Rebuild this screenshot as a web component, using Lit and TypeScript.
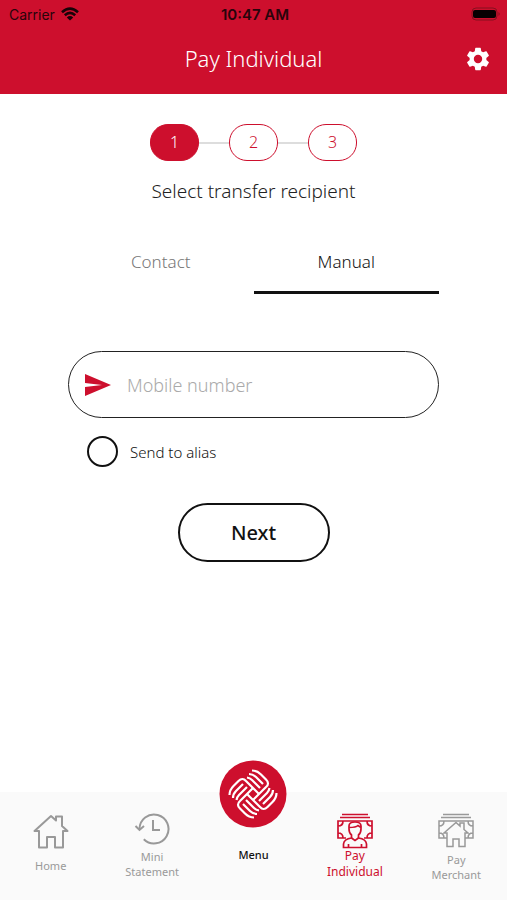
import { LitElement, html, css, svg } from "lit";
import { customElement, state } from "lit/decorators.js";

const wifiIcon = html`<svg width="18" height="14" viewBox="0 0 18 14" fill="none" stroke="#180308" stroke-width="2.6" aria-hidden="true">
  <path d="M1 5.2Q9-2 17 5.2M3.800 8.200Q9 3.600 14.200 8.200" />
  <path d="M9 13.500L5.800 10.400Q9 7.600 12.200 10.400Z" fill="#180308" stroke="none" />
</svg>`;

const batteryIcon = html`<svg width="30" height="14" viewBox="0 0 30 14" aria-hidden="true">
  <rect x="1" y="1" width="25" height="12" rx="4" fill="none" stroke="#85101f" />
  <rect x="2" y="3" width="23" height="8" rx="2" fill="#080002" />
  <path d="M27.500 5Q30 7 27.500 9Z" fill="#85101f" />
</svg>`;

const gearIcon = html`<svg width="28" height="28" viewBox="0 0 24 24" fill="#fff" aria-hidden="true">
  <path d="M19.140 12.940c.04-.3.06-.61.06-.94 0-.32-.02-.64-.07-.94l2.030-1.580c.18-.14.23-.41.12-.61l-1.920-3.320c-.12-.22-.37-.29-.59-.22l-2.390.96c-.5-.38-1.030-.7-1.620-.94l-.36-2.540c-.04-.24-.24-.41-.48-.41h-3.840c-.24 0-.43.17-.47.41l-.36 2.540c-.59.24-1.130.57-1.620.94l-2.390-.96c-.22-.08-.47 0-.59.22L2.740 8.870c-.12.21-.08.47.12.61l2.030 1.580c-.05.3-.09.63-.09.94s.02.64.07.94l-2.030 1.580c-.18.14-.23.41-.12.61l1.920 3.320c.12.22.37.29.59.22l2.390-.96c.5.38 1.030.7 1.620.94l.36 2.540c.05.24.24.41.48.41h3.840c.24 0 .44-.17.47-.41l.36-2.540c.59-.24 1.130-.56 1.620-.94l2.390.96c.22.08.47 0 .59-.22l1.920-3.320c.12-.22.07-.47-.12-.61zM12 15.600a3.600 3.600 0 1 1 0-7.200 3.600 3.600 0 0 1 0 7.200z" />
</svg>`;

const sendIcon = html`<svg width="26" height="24" viewBox="0 0 26 24" fill="#cd0f2d" aria-hidden="true">
  <path d="M0 1L26 12L0 23V14L17 12L0 10Z" />
</svg>`;

const homeIcon = html`<svg width="36" height="36" viewBox="0 0 36 36" fill="none" stroke="currentColor" stroke-width="2" stroke-linejoin="round" aria-hidden="true">
  <path d="M6 17H1.500L18 2L23 6.500V2.500H29V12L34.500 17H30V33.500H22V23H14V33.500H6Z" />
</svg>`;

const historyIcon = html`<svg width="36" height="34" viewBox="0 0 36 34" fill="none" stroke="currentColor" stroke-width="2" aria-hidden="true">
  <path d="M5.500 17A14.500 14.500 0 1 1 9.800 27.300" />
  <path d="M1.500 14L5.500 18L10 14M19 8V18H26" />
</svg>`;

const notes = svg`<path d="M5 1.500H31M3 4.500H33" />
  <path d="M9 25H1V8H35V25H27M1 13Q6 13 6 8M30 8Q30 13 35 13M1 20Q6 20 6 25M30 25Q30 20 35 20" />`;

const individualIcon = html`<svg width="36" height="36" viewBox="0 0 36 36" fill="none" stroke="currentColor" stroke-width="1.700" aria-hidden="true">
  ${notes}
  <path fill="#fafafa" d="M6.500 34.500V31Q7 26 14.500 25V22Q12 20 12 16V13Q12 9 18 9Q24 9 24 13V16Q24 20 21.500 22V25Q29 26 29.500 31V34.500Z" />
  <path d="M12 14.500Q19 14.500 21 12.500L24 14.500M14.500 25L18 27.500L21.500 25M11.500 31V34M24.500 31V34" />
</svg>`;

const merchantIcon = html`<svg width="36" height="36" viewBox="0 0 36 36" fill="none" stroke="currentColor" stroke-width="1.500" aria-hidden="true">
  ${notes}
  <path fill="#fafafa" d="M9 20H6L18 9.500L22 13V10H26V16.500L30 20H27V33.500H21V26H15V33.500H9Z" />
</svg>`;

const strands =
  "M-1 -23.500Q4 -23.500 8 -19.500L13 -14.500Q17 -10.500 13 -7L0 6" +
  "M-4 -20Q0 -20 3 -17L10 -10" +
  "M-6 -16.500Q-3 -16 -1 -14L7 -6";
const logo = html`<svg width="68" height="68" viewBox="-34 -34 68 68" aria-hidden="true">
  <circle r="33.500" fill="#cd0f2d" />
  <g fill="none" stroke="#fff" stroke-width="2.200">
    ${[0, 90, 180, 270].map((a) => svg`<path d=${strands} transform="rotate(${a})" />`)}
  </g>
</svg>`;

@customElement("app-root")
export class AppRoot extends LitElement {
  @state() private tab = "Manual";

  static styles = css`
    :host {
      display: flex;
      flex-direction: column;
      min-height: 100vh;
      background: #fff;
      color: #333;
      font-family: "Noto Sans", "Open Sans", sans-serif;
      font-weight: 300;
    }
    * { box-sizing: border-box; }
    svg { display: block; flex: none; }
    button { font: inherit; color: inherit; background: none; border: 0; padding: 0; }
    .header { background: #cd0f2d; padding-bottom: 10px; }
    .status {
      display: grid;
      grid-template-columns: 1fr auto 1fr;
      align-items: center;
      height: 28px;
      padding: 0 6px 0 9px;
      font: 400 14px "Inter", sans-serif;
      color: #28040b;
    }
    .carrier { display: flex; align-items: center; gap: 6px; }
    .time { font-size: 15px; font-weight: 600; }
    .battery { justify-self: end; }
    .bar {
      display: grid;
      grid-template-columns: 1fr auto 1fr;
      align-items: center;
      height: 56px;
      padding: 6px 15px 0;
      color: #fff;
    }
    .title { grid-column: 2; margin: 0; font-size: 22px; line-height: 30px; padding-bottom: 2px; font-weight: 300; }
    .settings { justify-self: end; }
    .main {
      flex: 1;
      display: flex;
      flex-direction: column;
      align-items: center;
      padding: 30px 68px 40px;
    }
    .steps { display: flex; align-items: center; list-style: none; margin: 0; padding: 0; }
    .step {
      width: 49px;
      height: 37px;
      border: 1px solid #cd0f2d;
      border-radius: 18px;
      color: #cd0f2d;
      font-size: 16px;
      line-height: 34px;
      text-align: center;
    }
    .step.current { background: #cd0f2d; color: #fff; }
    .link { width: 30px; height: 2px; background: #ddd; }
    .prompt { margin: 16px 0 0; font-size: 19px; line-height: 28px; font-weight: 300; color: #222; }
    .tabs { display: flex; width: 100%; margin-top: 26px; }
    .tab {
      flex: 1;
      height: 63px;
      border-bottom: 3px solid transparent;
      font-size: 17px;
      color: #777;
    }
    .tab.active { border-color: #111; color: #111; }
    .field {
      display: flex;
      align-items: center;
      gap: 16px;
      width: 100%;
      height: 67px;
      margin-top: 57px;
      padding: 0 16px;
      border: 1px solid #222;
      border-radius: 34px;
    }
    .input {
      flex: 1;
      min-width: 0;
      border: 0;
      outline: 0;
      padding: 0;
      background: none;
      color: #222;
      font: inherit;
      font-size: 18px;
    }
    .input::placeholder { color: #aaa; opacity: 1; }
    .alias {
      display: flex;
      align-items: center;
      align-self: flex-start;
      gap: 12px;
      margin: 18px 0 0 19px;
      font-size: 15px;
      color: #111;
    }
    .check {
      appearance: none;
      width: 31px;
      height: 31px;
      margin: 0;
      border: 2px solid #111;
      border-radius: 50%;
    }
    .check:checked { background: #cd0f2d; }
    .next {
      width: 152px;
      height: 59px;
      margin-top: 36px;
      border: 2px solid #111;
      border-radius: 30px;
      color: #111;
      font-size: 20px;
      font-weight: 500;
    }
    .nav {
      display: grid;
      grid-template-columns: repeat(5, 1fr);
      height: 108px;
      background: #fafafa;
    }
    .item {
      display: flex;
      flex-direction: column;
      align-items: center;
      padding-top: 21px;
      color: #999;
      font-size: 11px;
      font-weight: 400;
      line-height: 15px;
      text-align: center;
      text-decoration: none;
    }
    .item.home { padding-top: 22px; gap: 8px; }
    .item.mini { padding-top: 20px; gap: 3px; }
    .item.merchant { gap: 3px; }
    .item.individual { color: #cd0f2d; font-size: 12px; line-height: 16px; }
    .item.individual span { margin-top: -1px; }
    .item.menu { margin-top: -32px; padding-top: 0; gap: 19px; color: #111; font-weight: 500; }
  `;

  render() {
    return html`
      <header class="header">
        <div class="status">
          <span class="carrier">Carrier ${wifiIcon}</span>
          <span class="time">10:47 AM</span>
          <span class="battery">${batteryIcon}</span>
        </div>
        <div class="bar">
          <h1 class="title">Pay Individual</h1>
          <button class="settings" aria-label="Settings">${gearIcon}</button>
        </div>
      </header>
      <main class="main">
        <ol class="steps">
          <li class="step current" aria-current="step">1</li>
          <li class="link" role="presentation"></li>
          <li class="step">2</li>
          <li class="link" role="presentation"></li>
          <li class="step">3</li>
        </ol>
        <h2 class="prompt">Select transfer recipient</h2>
        <div class="tabs" role="tablist">
          ${["Contact", "Manual"].map(
            (name) => html`<button
              class="tab ${this.tab === name ? "active" : ""}"
              role="tab"
              aria-selected=${this.tab === name}
              @click=${() => (this.tab = name)}
            >${name}</button>`
          )}
        </div>
        <label class="field">
          ${sendIcon}
          <input class="input" type="tel" placeholder="Mobile number" aria-label="Mobile number" />
        </label>
        <label class="alias"><input class="check" type="checkbox" />Send to alias</label>
        <button class="next">Next</button>
      </main>
      <nav class="nav">
        <a class="item home" href="#home">${homeIcon}<span>Home</span></a>
        <a class="item mini" href="#statement">${historyIcon}<span>Mini<br />Statement</span></a>
        <a class="item menu" href="#menu">${logo}<span>Menu</span></a>
        <a class="item individual" href="#individual">${individualIcon}<span>Pay<br />Individual</span></a>
        <a class="item merchant" href="#merchant">${merchantIcon}<span>Pay<br />Merchant</span></a>
      </nav>
    `;
  }
}
